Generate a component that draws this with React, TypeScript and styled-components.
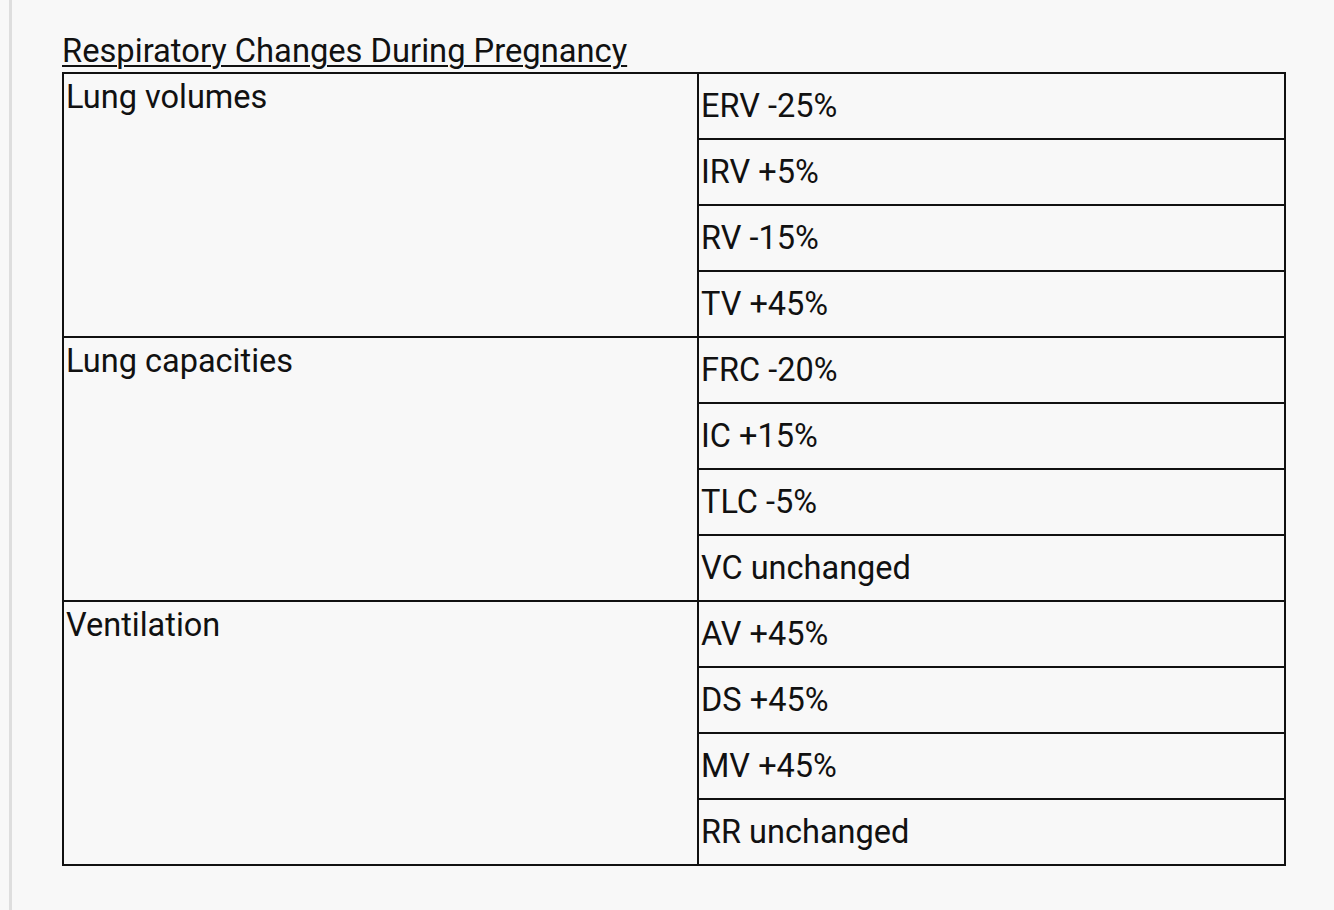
import styled, { createGlobalStyle } from "styled-components";

const GlobalStyle = createGlobalStyle`
    body {
        margin: 0;
        background: #f8f8f8;
        font-family: Roboto, "Liberation Sans", sans-serif;
        color: #111;
    }
`

const groups = [
    { name: "Lung volumes", items: ["ERV -25%", "IRV +5%", "RV -15%", "TV +45%"] },
    { name: "Lung capacities", items: ["FRC -20%", "IC +15%", "TLC -5%", "VC unchanged"] },
    { name: "Ventilation", items: ["AV +45%", "DS +45%", "MV +45%", "RR unchanged"] },
];

export default function App(){
    return <>
        <GlobalStyle/>
        <Page>
            <Heading>Respiratory Changes During Pregnancy</Heading>
            <Table>
                {groups.map((group, key) => <Group key={key}>
                    <GroupName>{group.name}</GroupName>
                    <Values>
                        {group.items.map((item, i) => <Value key={i}>{item}</Value>)}
                    </Values>
                </Group>)}
            </Table>
        </Page>
    </>
}

const Page = styled.div`
    margin-left: 9px;
    min-height: 100vh;
    box-sizing: border-box;
    border-left: 3px solid #dedede;
    padding: 31px 0 0 50px;
`
const Heading = styled.div`
    font-size: 32.7px;
    line-height: 40px;
    text-decoration: underline;
    text-decoration-thickness: 2px;
    text-underline-offset: 3px;
`
const Table = styled.div`
    width: 1224px;
    box-sizing: border-box;
    border: 2px solid #111;
    margin-top: 1px;
`
const Group = styled.div`
    display: grid;
    grid-template-columns: 633px 1fr;
    & + & {
        border-top: 2px solid #111;
    }
`
const GroupName = styled.div`
    font-size: 32.5px;
    line-height: 46px;
    padding: 0 2px;
`
const Values = styled.div`
    display: flex;
    flex-direction: column;
    border-left: 2px solid #111;
`
const Value = styled.div`
    height: 64px;
    display: flex;
    align-items: center;
    padding: 0 2px;
    font-size: 32.5px;
    & + & {
        border-top: 2px solid #111;
    }
`
